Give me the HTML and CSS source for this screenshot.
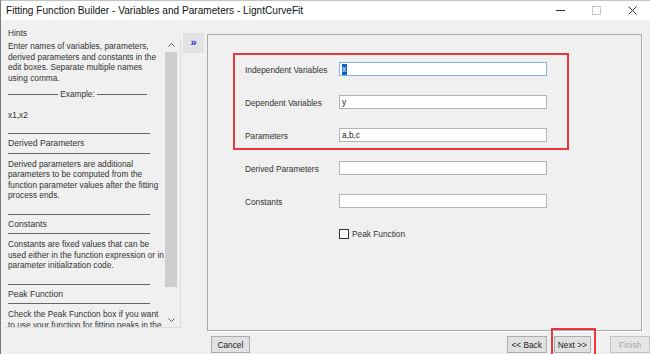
FILE: index.html
```html
<!DOCTYPE html>
<html lang="en">
<head>
    <meta charset="UTF-8">
    <title>Fitting Function Builder</title>
    <link rel="stylesheet" href="styles.css">
</head>
<body>
    <div class="window">
        <header class="titlebar">
            <span class="title">Fitting Function Builder - Variables and Parameters - LigntCurveFit</span>
            <div class="controls">
                <span class="ctrl"><svg width="9" height="9" viewBox="0 0 9 9"><line x1="0" y1="4.5" x2="9" y2="4.5" stroke="#333" stroke-width="1"/></svg></span>
                <span class="ctrl"><svg width="9" height="9" viewBox="0 0 9 9"><rect x="0.5" y="0.5" width="8" height="8" fill="none" stroke="#c8c8c8" stroke-width="1"/></svg></span>
                <span class="ctrl"><svg width="9" height="9" viewBox="0 0 9 9"><path d="M0.5 0.5 L8.5 8.5 M8.5 0.5 L0.5 8.5" stroke="#333" stroke-width="1"/></svg></span>
            </div>
        </header>

        <main class="main">
            <aside class="hints">
                <div class="hints-label">Hints</div>
                <div class="hints-box">
                    <div class="hints-text">
                        <p class="hint">Enter names of variables, parameters,<br>derived parameters and constants in the<br>edit boxes. Separate multiple names<br>using comma.</p>
                        <div class="example"><span>Example:</span></div>
                        <p class="hint sample">x1,x2</p>

                        <div class="topic">Derived Parameters</div>
                        <p class="hint">Derived parameters are additional<br>parameters to be computed from the<br>function parameter values after the fitting<br>process ends.</p>

                        <div class="topic">Constants</div>
                        <p class="hint">Constants are fixed values that can be<br>used either in the function expression or in<br>parameter initialization code.</p>

                        <div class="topic">Peak Function</div>
                        <p class="hint">Check the Peak Function box if you want<br>to use your function for fitting peaks in the</p>
                    </div>
                    <div class="scrollbar">
                        <span class="arrow"><svg width="7" height="4" viewBox="0 0 7 4"><polyline points="0.5,3.5 3.5,0.5 6.5,3.5" fill="none" stroke="#606060" stroke-width="1"/></svg></span>
                        <span class="thumb"></span>
                        <span class="track"></span>
                        <span class="arrow"><svg width="7" height="4" viewBox="0 0 7 4"><polyline points="0.5,0.5 3.5,3.5 6.5,0.5" fill="none" stroke="#606060" stroke-width="1"/></svg></span>
                    </div>
                </div>
            </aside>

            <button class="toggle">&raquo;</button>

            <section class="page">
                <div class="marked">
                    <div class="field">
                        <label>Independent Variables</label>
                        <div class="input focused"><span class="sel">x</span></div>
                    </div>
                    <div class="field">
                        <label>Dependent Variables</label>
                        <div class="input">y</div>
                    </div>
                    <div class="field">
                        <label>Parameters</label>
                        <div class="input">a,b,c</div>
                    </div>
                </div>
                <div class="fields">
                    <div class="field">
                        <label>Derived Parameters</label>
                        <div class="input"></div>
                    </div>
                    <div class="field">
                        <label>Constants</label>
                        <div class="input"></div>
                    </div>
                    <div class="check-row">
                        <span class="checkbox"></span>
                        <span>Peak Function</span>
                    </div>
                </div>
            </section>
        </main>

        <footer class="footer">
            <button class="btn cancel">Cancel</button>
            <button class="btn back">&lt;&lt; Back</button>
            <button class="btn next">Next &gt;&gt;</button>
            <button class="btn finish" disabled>Finish</button>
        </footer>
    </div>
</body>
</html>
```

FILE: styles.css
```css
* {
    box-sizing: border-box;
}

body {
    margin: 0;
    font-family: "Liberation Sans", Arial, sans-serif;
    font-size: 8.3px;
    color: #222;
    background-color: #f0f0f0;
}

.window {
    width: 650px;
    height: 354px;
    overflow: hidden;
    display: flex;
    flex-direction: column;
    border-left: 1px solid #7a7a7a;
}

/* title bar */
.titlebar {
    flex: none;
    height: 20px;
    display: flex;
    align-items: center;
    background-color: #fff;
    border-top: 1px solid #c4c4c4;
    padding-left: 5px;
}

.title {
    font-size: 10.1px;
    color: #111;
    white-space: nowrap;
}

.controls {
    margin-left: auto;
    display: flex;
}

.ctrl {
    width: 36px;
    display: flex;
    justify-content: center;
}

/* main area */
.main {
    flex: 1;
    display: flex;
    align-items: flex-start;
    padding: 6px 0 0 4px;
}

.hints {
    width: 176px;
}

.hints-label {
    height: 12px;
    line-height: 12px;
    padding: 1px 0 0 3px;
    color: #333;
}

.hints-box {
    height: 290px;
    display: flex;
    border-right: 1px solid #dcdcdc;
    border-bottom: 1px solid #dcdcdc;
}

.hints-text {
    flex: 1;
    overflow: hidden;
    padding: 3px 0 0 3px;
    color: #333;
}

.hint {
    margin: 0;
    line-height: 10.5px;
    white-space: nowrap;
}

.example {
    width: 139px;
    margin-top: 6px;
    line-height: 10.5px;
    display: flex;
    align-items: center;
    gap: 2px;
}

.example::before,
.example::after {
    content: "";
    flex: 1;
    border-top: 1px solid #666;
}

.sample {
    margin-top: 10px;
}

.topic {
    width: 142px;
    margin-top: 13px;
    padding: 4px 0;
    font-size: 8.6px;
    line-height: 10.5px;
    border-top: 1px solid #666;
    border-bottom: 1px solid #666;
}

.topic + .hint {
    margin-top: 5px;
}

.scrollbar {
    width: 12px;
    margin-right: 3px;
    display: flex;
    flex-direction: column;
}

.scrollbar .arrow {
    height: 14px;
    display: flex;
    align-items: center;
    justify-content: center;
}

.scrollbar .thumb {
    height: 235px;
    background-color: #cdcdcd;
}

.scrollbar .track {
    flex: 1;
}

.toggle {
    width: 21px;
    height: 20px;
    margin: 7px 0 0 2px;
    padding: 0 0 2px;
    border: none;
    background-color: #e2e2e2;
    color: #2b2bd6;
    font-family: "Liberation Sans", Arial, sans-serif;
    font-size: 11px;
    font-weight: bold;
}

/* wizard page */
.page {
    width: 435px;
    height: 297px;
    margin: 8px 0 0 3px;
    padding: 18px 0 0 25px;
    border: 1px solid #a9a9a9;
    box-shadow: 1px 1px 0 #fff;
}

.marked {
    width: 336px;
    padding: 7px 20px 6px 10px;
    border: 2px solid #e8383d;
    display: flex;
    flex-direction: column;
    gap: 19px;
}

.fields {
    margin-top: 11px;
    padding-left: 12px;
    display: flex;
    flex-direction: column;
    gap: 19px;
}

.field {
    display: flex;
    align-items: center;
    height: 14px;
}

.field label {
    width: 94px;
    padding-top: 2px;
    color: #333;
}

.input {
    width: 208px;
    height: 14px;
    padding-left: 2px;
    line-height: 12px;
    background-color: #fff;
    border: 1px solid #b4b4b4;
    color: #222;
}

.input.focused {
    border-color: #84b3e0;
}

.sel {
    display: inline-block;
    width: 5px;
    line-height: 11px;
    background-color: #0a64c8;
    color: #fff;
}

.check-row {
    margin: 2px 0 0 94px;
    display: flex;
    align-items: center;
    gap: 3px;
    color: #333;
}

.checkbox {
    width: 10px;
    height: 10px;
    background-color: #fff;
    border: 1px solid #333;
}

/* bottom buttons */
.footer {
    flex: none;
    height: 23px;
    display: flex;
    align-items: flex-start;
    padding-top: 5px;
}

.btn {
    height: 17px;
    padding: 0;
    font-family: "Liberation Sans", Arial, sans-serif;
    font-size: 8.3px;
    color: #222;
    background-color: #e1e1e1;
    border: 1px solid #adadad;
}

.cancel {
    width: 39px;
    margin-left: 210px;
}

.back {
    width: 40px;
    margin-left: 257px;
}

.next {
    position: relative;
    width: 38px;
    margin-left: 7px;
}

.next::after {
    content: "";
    position: absolute;
    top: -9px;
    left: -4px;
    right: -6px;
    bottom: -4px;
    border: 2px solid #e8383d;
}

.finish {
    width: 40px;
    margin-left: 19px;
    color: #a8a8a8;
    background-color: #e6e6e6;
    border-color: #c4c4c4;
}
```
